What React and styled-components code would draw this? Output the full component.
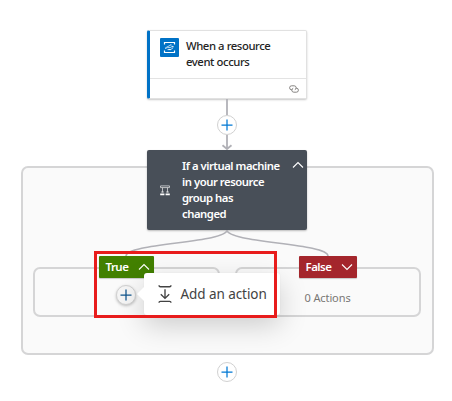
import React from "react";
import styled, { createGlobalStyle } from "styled-components";

const GlobalStyle = createGlobalStyle`
  * { box-sizing: border-box; }
  body { margin: 0; background: #fff; font-family: "Noto Sans", "Open Sans", sans-serif; }
  svg { display: block; flex: none; }
`;

const Canvas = styled.main`
  display: flex;
  flex-direction: column;
  align-items: center;
  width: 454px;
  height: 401px;
  padding-top: 30px;
  background: #fff;
`;

const TriggerCard = styled.article`
  display: flex;
  flex-direction: column;
  width: 160px;
  height: 69px;
  border: 1px solid #e1e1e1;
  border-left: 3px solid #0072c6;
  border-radius: 2px;
  background: #fff;
  box-shadow: 0 1px 2px rgba(0, 0, 0, 0.22);
`;

const CardHeader = styled.div`
  display: flex;
  flex: 1;
  gap: 7px;
  padding: 7px 0 0 10px;
`;

const CardFooter = styled.div`
  display: flex;
  align-items: center;
  justify-content: flex-end;
  height: 20px;
  padding-right: 7px;
  border-top: 1px solid #e3e3e3;
`;

const ConnectorIcon = styled.span`
  display: grid;
  place-items: center;
  width: 19px;
  height: 19px;
  border-radius: 1px;
  background: #0072c6;
`;

const Title = styled.h2`
  margin: 0;
  color: ${(p) => (p.$light ? "#fff" : "#242424")};
  font-size: 11.3px;
  font-weight: ${(p) => (p.$light ? 600 : 500)};
  line-height: 16px;
  letter-spacing: ${(p) => (p.$light ? -0.47 : -0.42)}px;
  white-space: nowrap;
`;

const Connector = styled.div`
  display: flex;
  flex-direction: column;
  align-items: center;
`;

const Scope = styled.section`
  display: flex;
  flex-direction: column;
  align-items: center;
  width: 413px;
  height: 189px;
  margin: 16px 0 7px 1px;
  padding-right: 1px;
  border: 2px solid #d5d5d6;
  border-radius: 7px;
  background: #fafafa;
`;

const ConditionCard = styled.article`
  display: flex;
  flex: none;
  align-items: center;
  gap: 12px;
  width: 160px;
  height: 80px;
  margin-top: -18px;
  padding: 0 3px 0 13px;
  border-radius: 2px;
  background: #484f58;
  box-shadow: 0 1px 2px rgba(0, 0, 0, 0.25);
`;

const CardToggle = styled.span`
  align-self: flex-start;
  margin: 11px 0 0 auto;
`;

const Branches = styled.div`
  display: grid;
  grid-template-columns: 187px 186px;
  gap: 15px;
  margin: 11px 1px 0 0;
`;

const Branch = styled.section`
  display: flex;
  flex-direction: column;
  align-items: center;
  gap: ${(p) => p.$gap}px;
  height: 50px;
  border: 2px solid #d5d5d6;
  border-radius: 7px;
`;

const BranchTab = styled.button`
  display: flex;
  flex: none;
  align-items: center;
  justify-content: space-between;
  width: ${(p) => p.$w}px;
  height: 22px;
  margin-top: -13px;
  padding: 0 4px 0 7px;
  border: 0;
  border-radius: 1px;
  background: ${(p) => p.$tone};
  box-shadow: 0 1px 1px rgba(0, 0, 0, 0.2);
  color: #fff;
  font: 600 11.5px/22px "Noto Sans", sans-serif;
  letter-spacing: -0.55px;
`;

const AddButton = styled.button`
  display: grid;
  flex: none;
  place-items: center;
  width: 20px;
  height: 20px;
  padding: 0;
  border: 1px solid #d1d1d1;
  border-radius: 50%;
  background: ${(p) => (p.$active ? "#f5f5f5" : "#fff")};
  color: ${(p) => (p.$active ? "#0f548c" : "#0078d4")};
  box-shadow: ${(p) => (p.$active ? "0 1px 3px rgba(0,0,0,.25)" : "none")};
`;

const EmptyText = styled.span`
  color: #797775;
  font-size: 11px;
  line-height: 16px;
  letter-spacing: -0.1px;
  white-space: nowrap;
`;

const PopoverAnchor = styled.div`
  position: relative;
  margin-right: 1px;
`;

const Popover = styled.div`
  position: absolute;
  left: 28px;
  top: -12px;
  display: flex;
  align-items: center;
  gap: 9px;
  width: 136px;
  height: 42px;
  padding-left: 14px;
  border-radius: 3px;
  background: #fff;
  box-shadow: 0 10px 28px rgba(0, 0, 0, 0.19), 0 0 2px rgba(0, 0, 0, 0.06);
  color: #424242;
  font-size: 13.5px;
  line-height: 20px;
  letter-spacing: -0.07px;
  white-space: nowrap;

  &::before {
    content: "";
    position: absolute;
    left: -7px;
    top: 14px;
    border: 7px solid transparent;
    border-left-width: 0;
    border-right-color: #fff;
  }
`;

const Highlight = styled.div`
  position: absolute;
  left: -22px;
  top: -34px;
  width: 183px;
  height: 67px;
  border: 3px solid #e81c1c;
  pointer-events: none;
`;

const Plus = () => (
  <svg width="12" height="12" viewBox="0 0 12 12" stroke="currentColor" strokeWidth="1.25">
    <path d="M6 .5v11M.5 6h11" />
  </svg>
);

const Chevron = ({ down }) => (
  <svg width="12" height="8" viewBox="0 0 12 8" fill="none" stroke="#fff" strokeWidth="1.1">
    <path d={down ? "M1 1.5l5 5 5-5" : "M1 6.5l5-5 5 5"} />
  </svg>
);

const LineDown = () => (
  <svg width="12" height="16" viewBox="0 0 12 16" stroke="#b1b1b7" strokeWidth="1.8">
    <path d="M6 0v16" />
  </svg>
);

const ArrowDown = () => (
  <svg width="12" height="15" viewBox="0 0 12 15" fill="none" stroke="#b1b1b7" strokeWidth="1.8">
    <path d="M6 0v13.6M1.5 10.3 6 14l4.5-3.7" />
  </svg>
);

const SplitEdges = () => (
  <svg width="204" height="26" viewBox="0 0 204 26" fill="none" stroke="#b1b1b7" strokeWidth="1.5">
    <path d="M102 0C102 13 1 13 1 26M102 0C102 13 203 13 203 26" />
  </svg>
);

const EventIcon = () => (
  <svg width="15" height="15" viewBox="0 0 15 15" fill="none" stroke="#fff">
    <path d="M2.5 4.4V2.5h10v1.9M2.5 10.6v1.9h10v-1.9" strokeWidth="1.2" />
    <path d="M3.5 7.8 8.2 5.3M5.2 7.6h3l2.4-1.4M5.5 9.6h3.2l2.4-1.8" strokeWidth=".9" opacity=".8" />
    <path d="M8 5h1.6M10 6.6h1.6M3 8.2h1.6M6.6 9.5h2.2" strokeWidth="1.1" opacity=".8" />
  </svg>
);

const ConditionIcon = () => (
  <svg width="10" height="11" viewBox="0 0 10 11" fill="none" stroke="#c8cacd">
    <path d="M.5.9h9v1.7h-9zM2.5 2.6v4.2M7.5 2.6v4.2" strokeWidth=".9" />
    <path d="M1.4 7h2.2M6.4 7h2.2" stroke="#fff" strokeWidth="1.2" />
    <path d="M.2 9.3h4.2M5.6 9.3h4.2" stroke="#fff" strokeWidth="1.8" />
  </svg>
);

const LinkIcon = () => (
  <svg width="10" height="8" viewBox="0 0 10 8" fill="none" stroke="#797775" strokeWidth=".9">
    <path d="M3.2 4.8H2.6a2 2 0 1 1 0-4h2.6a2 2 0 0 1 .6 3.9" />
    <path d="M6.8 3.2h.6a2 2 0 1 1 0 4H4.8a2 2 0 0 1-.6-3.9" />
  </svg>
);

const InsertActionIcon = () => (
  <svg width="14" height="20" viewBox="0 0 14 20" fill="none" stroke="#424242" strokeWidth="1.35">
    <path d="M1 1.2q0 1.5 1.4 1.5h9.2Q13 2.7 13 1.2M1 18.8q0-1.5 1.4-1.5h9.2q1.4 0 1.4 1.5" />
    <path d="M7 5.2v9M2.8 10.2 7 14.4l4.2-4.2" />
  </svg>
);

export default function App() {
  return (
    <Canvas>
      <GlobalStyle />
      <TriggerCard>
        <CardHeader>
          <ConnectorIcon><EventIcon /></ConnectorIcon>
          <Title>When a resource<br />event occurs</Title>
        </CardHeader>
        <CardFooter><LinkIcon /></CardFooter>
      </TriggerCard>

      <Connector>
        <LineDown />
        <AddButton aria-label="Add"><Plus /></AddButton>
        <ArrowDown />
      </Connector>

      <Scope>
        <ConditionCard>
          <ConditionIcon />
          <Title $light>If a virtual machine<br />in your resource<br />group has<br />changed</Title>
          <CardToggle><Chevron /></CardToggle>
        </ConditionCard>
        <SplitEdges />
        <Branches>
          <Branch $gap={7}>
            <BranchTab $w={55} $tone="#428000">True<Chevron /></BranchTab>
            <PopoverAnchor>
              <Popover><InsertActionIcon />Add an action</Popover>
              <AddButton $active aria-label="Add to True"><Plus /></AddButton>
              <Highlight />
            </PopoverAnchor>
          </Branch>
          <Branch $gap={12}>
            <BranchTab $w={58} $tone="#a4262c">False<Chevron down /></BranchTab>
            <EmptyText>0 Actions</EmptyText>
          </Branch>
        </Branches>
      </Scope>

      <AddButton aria-label="Add"><Plus /></AddButton>
    </Canvas>
  );
}
